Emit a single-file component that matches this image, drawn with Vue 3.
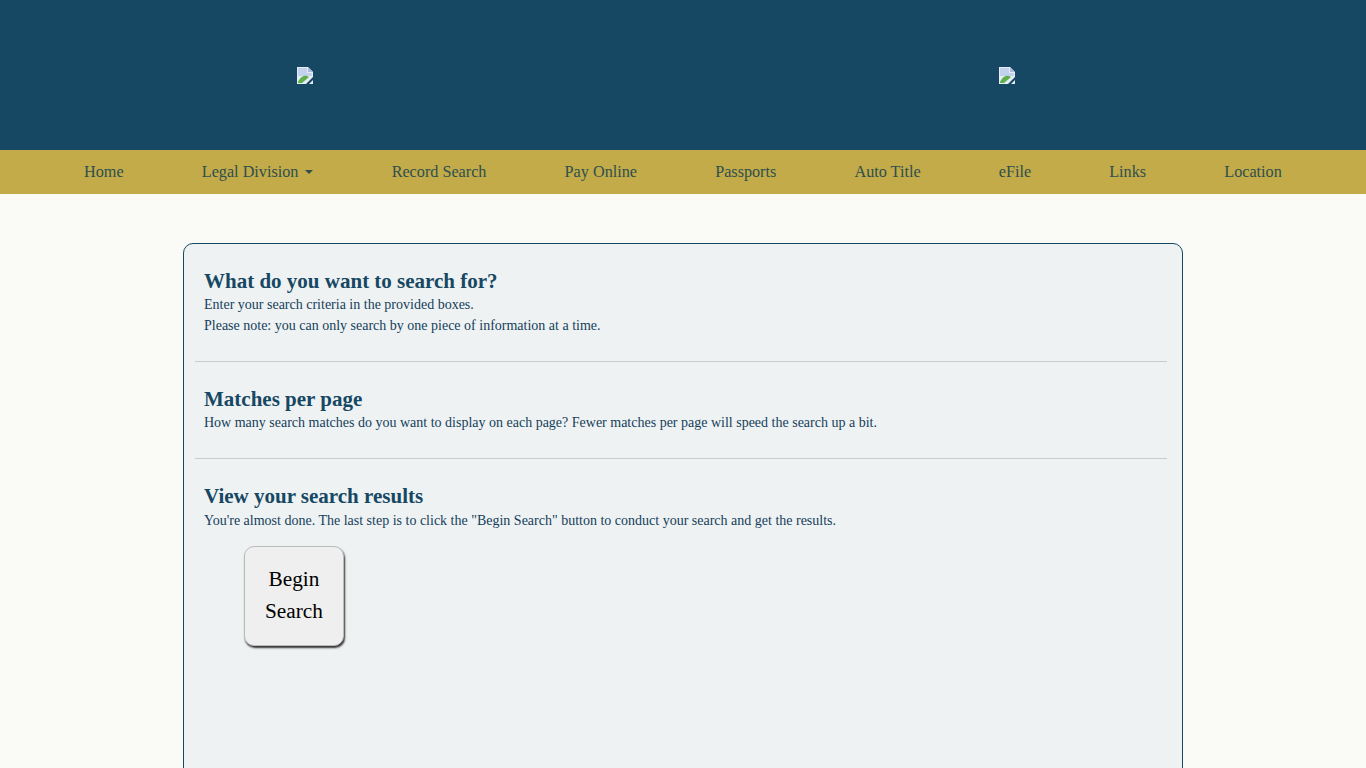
<template>
  <div class="page">
    <header class="banner">
      <div v-for="n in 2" :key="n" class="banner-col">
        <svg class="broken-img" width="17" height="17" viewBox="0 0 17 17">
          <path d="M0 0h11l5 5v5L9 17H0z" fill="#e6ecf6" />
          <path d="M11 0v5h5z" fill="#a9bcdc" />
          <path d="M1 1h9v5h5v3H1z" fill="#c3d3ee" />
          <path d="M1 15c2-4 5-7 9-6l2 1-7 6H1z" fill="#5fb04a" />
          <path d="M12 17l4-4v4z" fill="#e6ecf6" />
        </svg>
      </div>
    </header>

    <nav class="nav">
      <a v-for="item in navItems" :key="item.label" class="nav-link">
        {{ item.label }}
        <span v-if="item.caret" class="caret"></span>
      </a>
    </nav>

    <main class="content">
      <div class="panel">
        <section class="block">
          <h2>What do you want to search for?</h2>
          <p>Enter your search criteria in the provided boxes.</p>
          <p>Please note: you can only search by one piece of information at a time.</p>
        </section>
        <hr />
        <section class="block">
          <h2>Matches per page</h2>
          <p>How many search matches do you want to display on each page? Fewer matches per page will speed the search up a bit.</p>
        </section>
        <hr />
        <section class="block">
          <h2>View your search results</h2>
          <p>You're almost done. The last step is to click the "Begin Search" button to conduct your search and get the results.</p>
          <button class="begin-btn">Begin Search</button>
        </section>
      </div>
    </main>
  </div>
</template>

<script setup>
const navItems = [
  { label: 'Home' },
  { label: 'Legal Division', caret: true },
  { label: 'Record Search' },
  { label: 'Pay Online' },
  { label: 'Passports' },
  { label: 'Auto Title' },
  { label: 'eFile' },
  { label: 'Links' },
  { label: 'Location' }
]
</script>

<style>
html, body { overflow: hidden; }
</style>

<style scoped>
* { box-sizing: border-box; margin: 0; padding: 0; }

.page {
  font-family: 'Liberation Serif', serif;
  background: #fafaf7;
  min-height: 100vh;
  color: #164863;
}

.banner {
  height: 150px;
  background: #164863;
  display: grid;
  grid-template-columns: 702px 1fr;
  align-items: center;
  padding-left: 297px;
}

.broken-img { display: block; }

.nav {
  height: 44px;
  background: #c2ab48;
  display: flex;
  justify-content: space-around;
  align-items: center;
  padding: 0 45px;
}

.nav-link {
  font-size: 16.2px;
  color: #2f4f4f;
  white-space: nowrap;
}

.caret {
  display: inline-block;
  margin-left: 3px;
  vertical-align: 3px;
  border-top: 4.8px solid #2f4f4f;
  border-left: 4.8px solid transparent;
  border-right: 4.8px solid transparent;
}

.content {
  padding-top: 49px;
  display: flex;
  justify-content: center;
}

.panel {
  width: 1000px;
  min-height: 700px;
  padding: 25px 15px 25px 11px;
  background: #eff2f3;
  border: 1px solid #164863;
  border-radius: 10px;
}

.block { padding-left: 9px; }

h2 {
  font-size: 21px;
  line-height: 25.2px;
  font-weight: 700;
}

p {
  font-size: 14px;
  line-height: 21px;
  color: #14405a;
}

hr {
  border: none;
  border-top: 1px solid #c8cccc;
  margin: 25px 0;
}

.begin-btn {
  display: block;
  width: 100px;
  height: 100px;
  margin: 15.400px 0 0 40px;
  padding: 0 12px 3px;
  font-family: inherit;
  font-size: 21.3px;
  line-height: 32px;
  color: #000;
  background: #efefef;
  border: 1px solid #bbb;
  border-radius: 10px;
  box-shadow: 1px 2px 2px #333;
}
</style>
